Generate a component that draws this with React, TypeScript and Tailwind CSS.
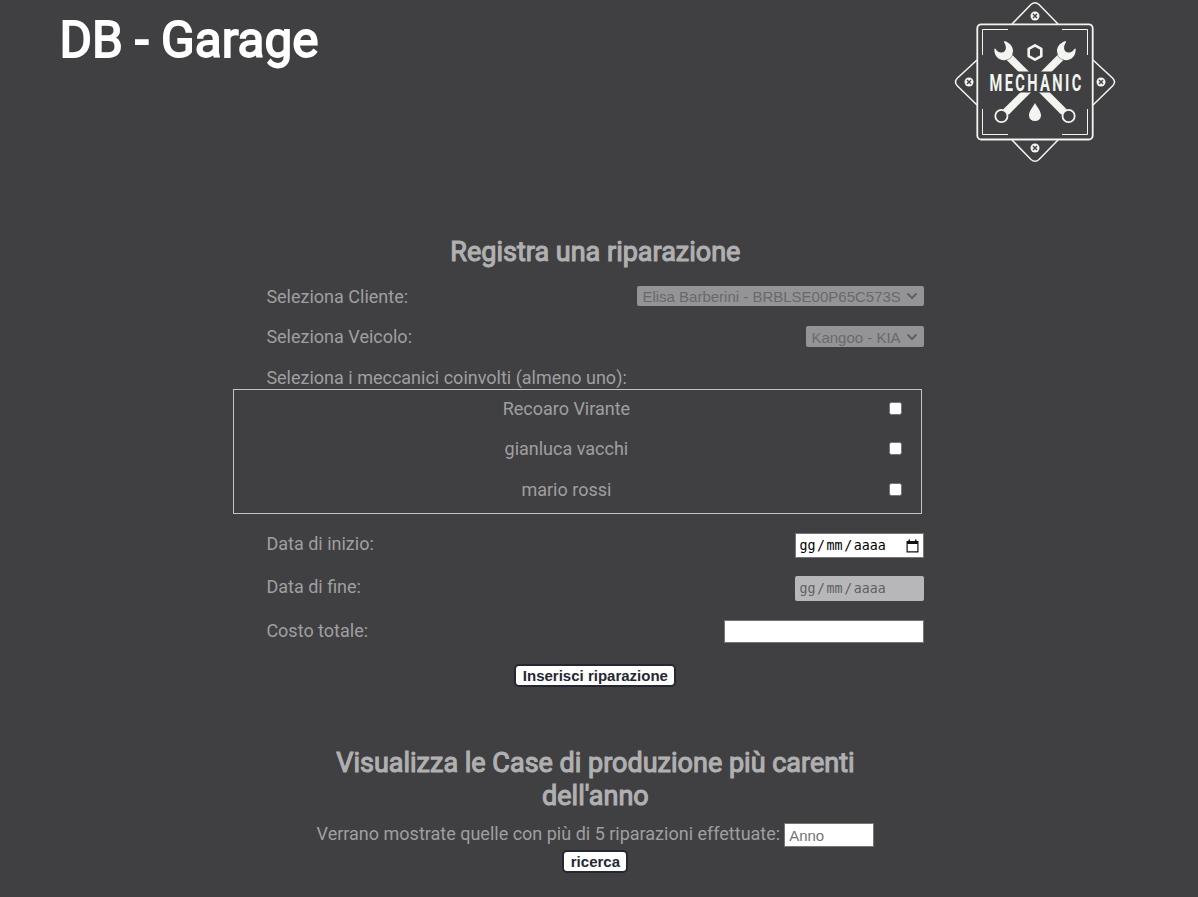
import type { ReactNode } from "react";

function Screw({ x, y }: { x: number; y: number }) {
  return (
    <g transform={`translate(${x} ${y})`}>
      <circle r="4.5" fill="#f2f5f0" />
      <path d="M-2-2L2 2M2-2L-2 2" stroke="#404042" strokeWidth="1.4" fill="none" />
    </g>
  );
}

function Wrench() {
  return (
    <g>
      <path d="M68 56L124 112" stroke="#f2f5f0" strokeWidth="7.6" />
      <path
        d="M64.300 41C69 42.300 73 46 73 51C73 56.500 69 60.200 64 60.200C58.500 60.200 54 55.800 54.300 48.800L55.500 48.800C57 51.800 60 53.300 63 52.200C66.300 51 67 46.500 64 42.200Z"
        fill="#f2f5f0"
      />
      <path d="M66 60Q72.500 59 73 52" stroke="#777779" strokeWidth=".7" fill="none" />
      <circle cx="128.600" cy="116" r="6.100" fill="#404042" stroke="#f2f5f0" strokeWidth="1.800" />
    </g>
  );
}

function Logo() {
  return (
    <svg width="200" height="180" viewBox="0 0 200 180" className="block">
      <g fill="none" stroke="#f2f5f0" strokeWidth="1.500">
        <path d="M72 24L91 4.500Q95 1 99 4.500L118 24" />
        <path d="M72 140L91 159.500Q95 163 99 159.500L118 140" />
        <path d="M37 60L17.500 78Q13.500 82 17.500 86L37 105" />
        <path d="M153 60L172.500 78Q176.500 82 172.500 86L153 105" />
        <rect x="37.300" y="24.300" width="115.400" height="115.200" rx="4" strokeWidth="1.800" />
        <path
          d="M42.500 55V29.500H68M122 29.500H147.500V55M147.500 109V134.500H122M68 134.500H42.500V109"
          strokeWidth="1"
        />
      </g>
      <Screw x={95} y={16} />
      <Screw x={95} y={148} />
      <Screw x={29} y={82} />
      <Screw x={161} y={82} />
      <Wrench />
      <g transform="translate(190 0) scale(-1 1)">
        <Wrench />
      </g>
      <path
        d="M95 45.300L101.300 48.900V56.100L95 59.700L88.700 56.100V48.900Z"
        fill="#404042"
        stroke="#f2f5f0"
        strokeWidth="2.600"
        strokeLinejoin="round"
      />
      <rect x="48" y="71.500" width="94" height="21" fill="#404042" />
      <text
        x="0"
        y="0"
        fontFamily="Roboto, sans-serif"
        fontWeight="700"
        fontSize="23.500"
        fill="#f2f5f0"
        transform="translate(49.500 90.700) scale(.62 1)"
        textLength="148"
        lengthAdjust="spacing"
      >
        MECHANIC
      </text>
      <path d="M95 103C97 107 101 111 101 115.500A6 5.500 0 0 1 89 115.500C89 111 93 107 95 103Z" fill="#f2f5f0" />
    </svg>
  );
}

function Chevron() {
  return (
    <svg width="12" height="10" viewBox="0 0 12 10" className="ml-[5px] shrink-0">
      <path d="M1.500 2.500L6 7L10.500 2.500" fill="none" stroke="#626264" strokeWidth="2" />
    </svg>
  );
}

function Select({ value, className }: { value: string; className: string }) {
  return (
    <div
      className={`flex items-center rounded-[2px] bg-[#949496] pl-[5px] font-['Liberation_Sans',Arial,sans-serif] text-[15px] leading-none text-[#69696b] ${className}`}
    >
      <span className="whitespace-nowrap pt-px">{value}</span>
      <Chevron />
    </div>
  );
}

function Row({ label, className, children }: { label: string; className: string; children?: ReactNode }) {
  return (
    <div className={`flex items-start justify-between ${className}`}>
      <label className="leading-[21px]">{label}</label>
      {children}
    </div>
  );
}

function DateText() {
  return (
    <span className="flex gap-[1.6px] font-['DejaVu_Sans_Mono',monospace] text-[13.3px] leading-none">
      <span>gg</span>
      <span>/</span>
      <span>mm</span>
      <span>/</span>
      <span>aaaa</span>
    </span>
  );
}

function Mechanic({ name, className }: { name: string; className: string }) {
  return (
    <label className={`flex items-start ${className}`}>
      <span className="ml-[10px] w-[644px] text-center leading-[21px]">{name}</span>
      <span className="mt-[4px] ml-px h-[13px] w-[13px] rounded-[2.5px] border border-[#767676] bg-white" />
    </label>
  );
}

function Button({ children, className }: { children: ReactNode; className: string }) {
  return (
    <button
      className={`block rounded-[5px] border-2 border-[#252733] bg-white text-center font-['Liberation_Sans',Arial,sans-serif] text-[15px] leading-[19px] font-bold text-[#252733] ${className}`}
    >
      {children}
    </button>
  );
}

export default function App() {
  return (
    <div className="h-[897px] w-full overflow-hidden bg-[#404042] font-[Roboto,sans-serif] text-[18px] text-[#9f9fa0]">
      <header className="flex h-[235px] items-start justify-between pr-[58px] pl-[59.5px]">
        <h1 className="mt-[11px] text-[49.500px] leading-[59px] font-normal text-white [-webkit-text-stroke:1.8px_white]">
          DB - Garage
        </h1>
        <Logo />
      </header>

      <main>
        <section className="ml-[266.4px] w-[658px]">
          <h2 className="h-[51px] text-center text-[27px] leading-[34px] font-normal text-[#b0b0b1] [-webkit-text-stroke:1.1px_#b0b0b1]">
            Registra una riparazione
          </h2>
          <Row label="Seleziona Cliente:" className="h-[40px]">
            <Select value="Elisa Barberini - BRBLSE00P65C573S" className="h-[20px] w-[287px]" />
          </Row>
          <Row label="Seleziona Veicolo:" className="h-[41px]">
            <Select value="Kangoo - KIA" className="h-[21px] w-[118px]" />
          </Row>
          <Row label="Seleziona i meccanici coinvolti (almeno uno):" className="h-[22px]" />
          <div className="-ml-[33px] h-[125px] w-[689px] border border-[#c4c4c5] pt-[8px]">
            <Mechanic name="Recoaro Virante" className="h-[40px]" />
            <Mechanic name="gianluca vacchi" className="h-[41px]" />
            <Mechanic name="mario rossi" className="h-[21px]" />
          </div>
          <Row label="Data di inizio:" className="mt-[19px] h-[43px]">
            <div className="flex h-[25px] w-[129px] items-center justify-between border border-[#767676] bg-white pr-[4px] pl-[3px] text-black">
              <DateText />
              <svg width="13" height="14" viewBox="0 0 13 14">
                <path d="M.500 2H12.500V13.500H.500ZM1.700 5V12.300H11.300V5Z" fillRule="evenodd" fill="#111" />
                <path d="M2.500 .500H4V2H2.500ZM9 .500H10.500V2H9Z" fill="#111" />
              </svg>
            </div>
          </Row>
          <Row label="Data di fine:" className="h-[44px]">
            <div className="flex h-[25px] w-[129px] items-center rounded-[2px] bg-[#b7b7b9] pt-px pl-[4px] text-[#606062]">
              <DateText />
            </div>
          </Row>
          <Row label="Costo totale:" className="h-[44px]">
            <input className="h-[23px] w-[200.500px] border border-[#767676] bg-white px-1 text-black" />
          </Row>
          <Button className="mx-auto h-[23px] w-[162px]">Inserisci riparazione</Button>
        </section>

        <section className="ml-[295.4px] w-[600px] pt-[60px]">
          <h2 className="mx-auto w-[560px] text-center text-[27px] leading-[33px] font-normal text-[#b0b0b1] [-webkit-text-stroke:1.1px_#b0b0b1]">
            Visualizza le Case di produzione più carenti dell&apos;anno
          </h2>
          <div className="mt-[10px] flex items-start justify-center">
            <label className="leading-[21px]">Verrano mostrate quelle con più di 5 riparazioni effettuate:</label>
            <input
              placeholder="Anno"
              className="ml-[4px] h-[24px] w-[90px] border border-[#767676] bg-white px-[4px] font-['Liberation_Sans',Arial,sans-serif] text-[15px] text-black placeholder:text-[#757575]"
            />
          </div>
          <Button className="mx-auto mt-[3px] h-[23px] w-[66px]">ricerca</Button>
        </section>
      </main>
    </div>
  );
}
